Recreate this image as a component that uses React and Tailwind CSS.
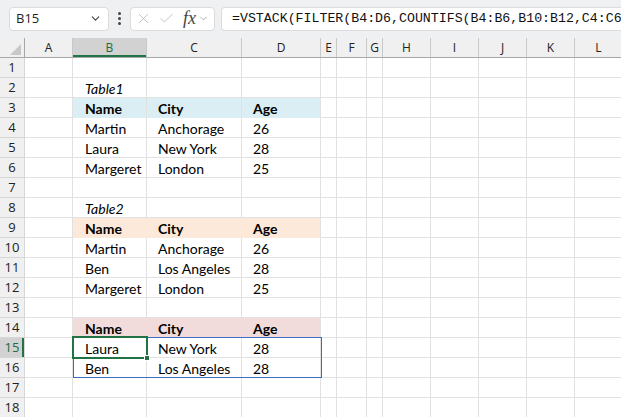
import React from "react";
import { ChevronDown, X, Check } from "lucide-react";

// column letters and their pixel widths (incl. the 1px gridline)
const COLS = [
  ["A", 48],
  ["B", 74],
  ["C", 95],
  ["D", 79],
  ["E", 16],
  ["F", 30],
  ["G", 16],
  ["H", 48],
  ["I", 48],
  ["J", 48],
  ["K", 48],
  ["L", 48],
];

// header fills: [background + bottom border, right border inside the band]
const FILLS = {
  3: ["bg-[#daeef3] border-b-[#daeef3]", "border-r-[#daeef3]"],
  9: ["bg-[#fde9d9] border-b-[#fde9d9]", "border-r-[#fde9d9]"],
  14: ["bg-[#f2dcdb] border-b-[#f2dcdb]", "border-r-[#f2dcdb]"],
};

// cell contents per row: [B, C, D]
const DATA = {
  2: ["Table1"],
  3: ["Name", "City", "Age"],
  4: ["Martin", "Anchorage", "26"],
  5: ["Laura", "New York", "28"],
  6: ["Margeret", "London", "25"],
  8: ["Table2"],
  9: ["Name", "City", "Age"],
  10: ["Martin", "Anchorage", "26"],
  11: ["Ben", "Los Angeles", "28"],
  12: ["Margeret", "London", "25"],
  14: ["Name", "City", "Age"],
  15: ["Laura", "New York", "28"],
  16: ["Ben", "Los Angeles", "28"],
};

const italicRows = [2, 8];
const boldRows = [3, 9, 14];
const pads = { B: "pl-[12px]", C: "pl-[11px]", D: "pl-[11px]" };

const TopBar = () => (
  <div className="h-[38px] bg-[#eff0f2] flex items-center pl-[9px] pt-[1px] pb-[2px]">
    <div className="w-[100px] h-[24px] bg-white rounded-[4px] border border-[#dcdcdc] flex items-center justify-between pl-[6px] pr-[6px]">
      <span className="text-[13px] text-[#1f1f1f] font-['Open_Sans',sans-serif]">B15</span>
      <ChevronDown size={13} strokeWidth={2} className="text-[#444]" />
    </div>
    <div className="w-[21px] flex flex-col items-center gap-[2px]">
      <span className="w-[3px] h-[3px] rounded-full bg-[#444]" />
      <span className="w-[3px] h-[3px] rounded-full bg-[#444]" />
      <span className="w-[3px] h-[3px] rounded-full bg-[#444]" />
    </div>
    <div className="w-[85px] h-[24px] bg-white rounded-[4px] border border-[#dcdcdc] flex items-center pl-[4px]">
      <X size={17} strokeWidth={1.1} className="text-[#b4b4b4]" />
      <Check size={17} strokeWidth={1.1} className="text-[#b4b4b4] ml-[6px]" />
      <span className="ml-[8px] text-[18px] italic text-[#444] font-['Liberation_Serif',serif] leading-none pb-[2px]">fx</span>
      <ChevronDown size={11} strokeWidth={1.5} className="text-[#888] ml-[2px]" />
    </div>
    <div className="ml-[6px] flex-1 h-[24px] bg-white rounded-l-[4px] border border-r-0 border-[#dcdcdc] flex items-center pl-[10px] overflow-hidden whitespace-nowrap">
      <span className="text-[13.25px] text-[#111] font-['Liberation_Mono',monospace]">
        =VSTACK(FILTER(B4:D6,COUNTIFS(B4:B6,B10:B12,C4:C6
      </span>
    </div>
  </div>
);

const HeaderRow = () => (
  <div className="flex h-[20px] bg-[#f0f0f0] border-b border-[#a8a8a8]">
    <div className="w-[25px] shrink-0 h-full border-r border-[#a8a8a8] relative">
      <div className="absolute right-[3px] bottom-[2px] w-0 h-0 border-l-[11px] border-l-transparent border-b-[11px] border-b-[#c8c8c8]" />
    </div>
    {COLS.map(([c, w]) => (
      <div
        key={c}
        style={{ width: w }}
        className={`shrink-0 h-full border-r border-[#c8c8c8] flex items-center justify-center text-[12px] font-['Open_Sans',sans-serif] ${
          c === "B" ? "bg-[#d2d2d2] text-[#1e6b41] shadow-[inset_0_-2px_0_#217346]" : "text-[#222]"
        }`}
      >
        {c}
      </div>
    ))}
  </div>
);

const Row = ({ n }) => {
  const vals = DATA[n] || [];
  const fill = FILLS[n];
  return (
    <div className="flex h-[20px]">
      <div
        className={`w-[25px] shrink-0 h-full border-r border-b border-[#d6d6d6] flex items-center justify-center text-[13px] font-['Open_Sans',sans-serif] ${
          n === 15 ? "bg-[#d2d2d2] text-[#1e6b41] shadow-[inset_-2px_0_0_#217346]" : "bg-[#f0f0f0] text-[#222]"
        }`}
      >
        {n}
      </div>
      {COLS.map(([c, w], i) => {
        const inTable = i >= 1 && i <= 3;
        const v = inTable ? vals[i - 1] : null;
        const filled = fill && inTable;
        let cls = "border-b border-r border-[#e1e1e1]";
        if (filled) cls = `border-b border-r border-r-[#e1e1e1] ${fill[0]} ${i < 3 ? fill[1] : ""}`;
        return (
          <div
            key={c}
            style={{ width: w }}
            className={`shrink-0 h-full ${cls} flex items-center whitespace-nowrap text-[14px] leading-none text-black font-['Lato',sans-serif] ${
              pads[c] || ""
            } ${boldRows.includes(n) ? "font-bold" : ""} ${italicRows.includes(n) ? "italic" : ""}`}
          >
            <span className="pt-[3px]">{v}</span>
          </div>
        );
      })}
    </div>
  );
};

export default function App() {
  const rows = Array.from({ length: 18 }, (_, i) => i + 1);
  return (
    <div className="w-[621px] h-[417px] overflow-hidden bg-white">
      <TopBar />
      <div className="relative">
        <HeaderRow />
        {rows.map((n) => (
          <Row key={n} n={n} />
        ))}
        {/* spill range outline B15:D16 */}
        <div className="absolute left-[73px] top-[299px] w-[249px] h-[41px] border border-[#3c6fc4] pointer-events-none" />
        {/* active cell B15 */}
        <div className="absolute left-[72px] top-[298px] w-[76px] h-[23px] border-2 border-[#217346] pointer-events-none">
          <div className="absolute right-[-4px] bottom-[-4px] w-[6px] h-[6px] bg-[#217346] border border-white" />
        </div>
      </div>
    </div>
  );
}
